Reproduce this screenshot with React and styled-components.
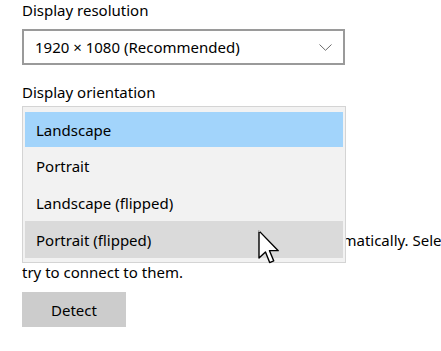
import React from "react";
import styled, { createGlobalStyle } from "styled-components";

const GlobalStyle = createGlobalStyle`
  html, body {
    margin: 0;
    padding: 0;
    background: #ffffff;
    overflow: hidden;
  }
  body {
    font-family: "Noto Sans", "Liberation Sans", sans-serif;
    color: #000;
  }
`;

const Page = styled.div`
  position: relative;
  width: 441px;
  height: 351px;
  padding-left: 22px;
  box-sizing: border-box;
  overflow: hidden;
`;

const Label = styled.div`
  font-size: 15px;
  line-height: 20px;
  margin-top: ${(p) => p.$top}px;
  white-space: nowrap;
`;

const SelectBox = styled.div`
  position: relative;
  width: 323px;
  height: 36px;
  margin-top: ${(p) => p.$top}px;
  border: 2px solid #9a9a9a;
  box-sizing: border-box;
  display: flex;
  align-items: center;
  justify-content: space-between;
  padding: 0 11px 0 11px;
  font-size: 15px;
`;

const Chevron = () => (
  <svg width="13" height="7" viewBox="0 0 13 7" fill="none">
    <path d="M0.5 0.5 L6.5 6.3 L12.5 0.5" stroke="#6b6b6b" strokeWidth="1" />
  </svg>
);

const Popup = styled.div`
  position: absolute;
  left: -2px;
  top: -4px;
  width: 324px;
  box-sizing: border-box;
  background: #f2f2f2;
  border: 1px solid #d4d4d4;
  padding: 5px 2px 4px 2px;
  z-index: 2;
`;

const Option = styled.div`
  height: ${(p) => (p.$short ? 35 : 37)}px;
  display: flex;
  align-items: center;
  padding-left: 11px;
  font-size: 15px;
  background: ${(p) =>
    p.$selected ? "#a2d4fb" : p.$hover ? "#dadada" : "transparent"};
`;

const Hint = styled.div`
  margin-top: ${(p) => p.$top}px;
  font-size: 15px;
  line-height: 32px;
  white-space: nowrap;
`;

const Button = styled.div`
  width: 104px;
  height: 35px;
  margin-top: 4px;
  background: #cccccc;
  display: flex;
  align-items: center;
  justify-content: center;
  font-size: 15px;
`;

const Cursor = styled.svg`
  position: absolute;
  left: 258px;
  top: 230px;
  z-index: 3;
`;

const options = ["Landscape", "Portrait", "Landscape (flipped)", "Portrait (flipped)"];

export default function App() {
  return (
    <Page>
      <GlobalStyle />
      <Label $top={0}>Display resolution</Label>
      <SelectBox $top={9}>
        <span>1920 × 1080 (Recommended)</span>
        <Chevron />
      </SelectBox>
      <Label $top={17}>Display orientation</Label>
      <SelectBox $top={6}>
        <span>Landscape</span>
        <Chevron />
        <Popup>
          {options.map((o, i) => (
            <Option
              key={o}
              $selected={i === 0}
              $hover={i === 3}
              $short={i === 0}
            >
              {o}
            </Option>
          ))}
        </Popup>
      </SelectBox>
      <Hint $top={80}>
        Older displays might not always connect automatically. Select Detect to
        <br />
        try to connect to them.
      </Hint>
      <Button>Detect</Button>
      <Cursor width="23" height="35" viewBox="0 0 13 20">
        <path
          d="M0.5 0.5 L0.5 16 L4.2 12.6 L6.6 18.6 L8.9 17.6 L6.5 11.8 L11.5 11.8 Z"
          fill="#ffffff"
          stroke="#000000"
          strokeWidth="0.8"
          strokeLinejoin="round"
        />
        <circle cx="0.6" cy="0.6" r="0.6" fill="#cfcfcf" />
      </Cursor>
    </Page>
  );
}
